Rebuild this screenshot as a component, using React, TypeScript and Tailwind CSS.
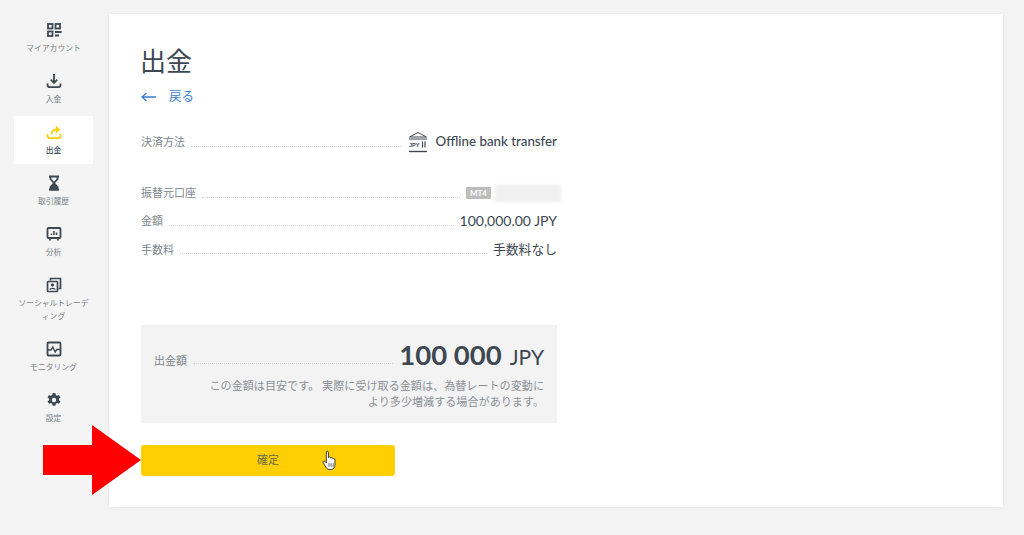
import type { ReactNode } from 'react'

const FONT = "font-['Lato','Noto_Sans_CJK_JP',sans-serif]"

const Account = () => (
  <svg width="16" height="16" viewBox="0 0 16 16" fill="none" stroke="#3d4852" strokeWidth="1.800">
    <rect x="2" y="2" width="4.500" height="4.500" />
    <rect x="9.500" y="2" width="4.500" height="4.500" />
    <rect x="2" y="9.500" width="4.500" height="4.500" />
    <path d="M9 10h6.500M9 13.500h4" />
  </svg>
)

const Deposit = () => (
  <svg width="16" height="16" viewBox="0 0 16 16" fill="none" stroke="#3d4852" strokeWidth="1.800">
    <path d="M8 1v8.500M4.800 6.600 8 10l3.200-3.400" />
    <path d="M1.500 10.500v1.200c0 1.500 1 2.500 2.500 2.500h8c1.500 0 2.500-1 2.500-2.500v-1.200" />
  </svg>
)

const Withdraw = () => (
  <svg width="16" height="16" viewBox="0 0 16 16" fill="none" stroke="#ffcf01" strokeWidth="1.800">
    <path d="M1.500 10v1.700c0 1.500 1 2.500 2.500 2.500h8c1.500 0 2.500-1 2.500-2.500V10" />
    <path d="M5.500 10.500c0-3 2-4.800 5.500-4.800" />
    <path d="M9.800 1.800 13.500 5.600 9.800 9.200" fill="#ffcf01" strokeWidth="1" />
  </svg>
)

const Hourglass = () => (
  <svg width="16" height="16" viewBox="0 0 16 16" fill="none" stroke="#3d4852" strokeWidth="1.800">
    <path d="M3 1.500h10M3 14.500h10" />
    <path d="M4.500 1.500v2.500L8 8l3.500-4V1.500" />
    <path d="M4.500 14.500V12L8 8l3.500 4v2.500z" fill="#3d4852" />
  </svg>
)

const Analytics = () => (
  <svg width="16" height="16" viewBox="0 0 16 16" fill="none" stroke="#3d4852" strokeWidth="1.800">
    <rect x="1.500" y="2" width="13" height="10" rx="1" />
    <path d="M4 12v2.500M12 12v2.500" />
    <path d="M5.500 9V7.500M8 9V5M10.500 9V6.500" strokeWidth="1.500" />
  </svg>
)

const Social = () => (
  <svg width="16" height="16" viewBox="0 0 16 16" fill="none" stroke="#3d4852" strokeWidth="1.700">
    <path d="M4.500 3.500V1.500h10v10h-2" />
    <rect x="1.500" y="4.500" width="10" height="10" rx="0.800" />
    <circle cx="6.500" cy="8" r="1.300" fill="#3d4852" strokeWidth="0.800" />
    <path d="M4 12.500c0-1.500 5-1.500 5 0" strokeWidth="1.300" />
  </svg>
)

const Monitoring = () => (
  <svg width="16" height="16" viewBox="0 0 16 16" fill="none" stroke="#3d4852" strokeWidth="1.800">
    <rect x="1.500" y="1.500" width="13" height="13" rx="1" />
    <path d="M2 9h3l1.800-3 2.400 5 1.500-2.500H14" strokeWidth="1.400" />
  </svg>
)

const Settings = () => (
  <svg width="16" height="16" viewBox="0 0 16 16">
    <path
      fill="#3d4852"
      fillRule="evenodd"
      d="M6.600 1h2.800l.4 2 1.200.7 2-.7 1.400 2.400-1.500 1.300v1.400l1.500 1.300-1.400 2.400-2-.7-1.200.7-.4 2H6.600l-.4-2-1.200-.7-2 .7-1.400-2.400 1.500-1.300V6.700L1.600 5.400 3 3l2 .7 1.200-.7zM8 5.800a2.200 2.200 0 1 0 0 4.400 2.200 2.200 0 0 0 0-4.400z"
    />
  </svg>
)

const BankIcon = () => (
  <svg width="22" height="22" viewBox="0 0 22 22" fill="none" stroke="#3d4852">
    <path d="M2.500 6 11 1.500 19.500 6z" strokeWidth="1" />
    <path d="M2 8h18" strokeWidth="1" />
    <path d="M15.500 10.500v6M18 10.500v6" strokeWidth="1.200" />
    <path d="M2 20.500h18" strokeWidth="1.400" />
    <text x="2" y="16" fontSize="5.500" fontWeight="700" fill="#3d4852" stroke="none" fontFamily="Liberation Sans, sans-serif">JPY</text>
  </svg>
)

const HandCursor = () => (
  <svg width="15" height="21" viewBox="0 0 14 20">
    <path
      d="M4 1.500c.8-.8 2-.4 2 .8v5c.3-.8 2-.8 2.200.4.400-.7 1.900-.5 2 .6.500-.5 2-.2 2 1.200v4.500c0 2.500-1.500 4.500-3.500 4.500H6.500c-1.500 0-2.300-1-3-2.200L1 12c-.6-1.200.9-2.200 1.800-1L4 12.300z"
      fill="#fff"
      stroke="#333"
      strokeWidth="0.900"
    />
    <path d="M6.500 12.500v3.500M8.500 12.500v3.500M10.500 12.500v3.500" stroke="#333" strokeWidth="0.700" />
  </svg>
)

const NAV: { label: ReactNode; icon: ReactNode; active?: boolean; h: string }[] = [
  { label: 'マイアカウント', icon: <Account />, h: 'h-[51px]' },
  { label: '入金', icon: <Deposit />, h: 'h-[51px]' },
  { label: '出金', icon: <Withdraw />, active: true, h: 'h-[51px]' },
  { label: '取引履歴', icon: <Hourglass />, h: 'h-[51px]' },
  { label: '分析', icon: <Analytics />, h: 'h-[51px]' },
  {
    label: (
      <>
        ソーシャルトレーデ
        <br />
        ィング
      </>
    ),
    icon: <Social />,
    h: 'h-[64px]',
  },
  { label: 'モニタリング', icon: <Monitoring />, h: 'h-[51px]' },
  { label: '設定', icon: <Settings />, h: 'h-[51px]' },
]

function NavItem({ label, icon, active, h }: (typeof NAV)[number]) {
  return (
    <div className={`${h} flex flex-col items-center`}>
      <div
        className={`w-[79px] flex flex-col items-center pt-[8px] pb-[7px] ${active ? 'bg-white h-[48px] text-[#3d4852]' : 'text-[#777e86]'}`}
      >
        <div className="h-4 flex items-center justify-center mb-[4px]">{icon}</div>
        <div className={`text-[7.800px] leading-[12.500px] text-center whitespace-nowrap ${active ? 'font-medium' : ''}`}>
          {label}
        </div>
      </div>
    </div>
  )
}

function Row({ label, children, className = '' }: { label: string; children: ReactNode; className?: string }) {
  return (
    <div className={`flex items-center ${className}`}>
      <span className="text-[11px] text-[#80868d] leading-4">{label}</span>
      <span className="flex-1 mx-[6px] mt-[8px] border-b border-dotted border-[#d2d2d2]" />
      {children}
    </div>
  )
}

export default function App() {
  return (
    <div className={`${FONT} relative w-[1024px] h-[535px] bg-[#f4f4f4] flex overflow-hidden`}>
      <aside className="w-[107px] shrink-0 pt-[14px]">
        {NAV.map((item, i) => (
          <NavItem key={i} {...item} />
        ))}
      </aside>

      <main className="ml-[2px] mt-[14px] w-[894px] h-[493px] bg-white shadow-[0_0_4px_rgba(0,0,0,0.08)] pl-[32px] pt-[29px]">
        <div className="w-[416px]">
          <h1 className="-ml-[1px] text-[26px] leading-[36px] text-[#3d4852]">出金</h1>
          <div className="mt-[9px] flex items-center gap-[12px] text-[12.500px] leading-[18px] text-[#3a7fd5]">
            <svg width="16" height="10" viewBox="0 0 16 10" fill="none" stroke="#3a7fd5" strokeWidth="1.300">
              <path d="M15 5H1M5.500 1 1 5l4.500 4" />
            </svg>
            戻る
          </div>

          <Row label="決済方法" className="mt-[23px] h-[26px]">
            <span className="flex items-center gap-[7px]">
              <BankIcon />
              <span className="text-[13.300px] font-medium text-[#3d4852]">Offline bank transfer</span>
            </span>
          </Row>

          <Row label="振替元口座" className="mt-[24px] h-[28px]">
            <span className="flex items-center gap-[4px] -mr-[4px]">
              <span className="bg-[#bdbdbd] text-white text-[8px] font-bold leading-[10px] px-[4px] py-[1px] rounded-[1px]">
                MT4
              </span>
              <span className="w-[66px] h-[17px] bg-[#f0f0f0] blur-[1.500px]" />
            </span>
          </Row>

          <Row label="金額" className="h-[28px]">
            <span className="-mt-[2px] text-[14px] text-[#3d4852]">100,000.00 JPY</span>
          </Row>

          <Row label="手数料" className="h-[29px]">
            <span className="text-[12.800px] text-[#3d4852]">手数料なし</span>
          </Row>

          <section className="mt-[61px] h-[98px] bg-[#f3f3f3] px-[13px] pt-[14px] text-right">
            <div className="flex items-center h-[36px]">
              <span className="mt-[8px] text-[11px] text-[#80868d]">出金額</span>
              <span className="flex-1 mx-[6px] mt-[12px] border-b border-dotted border-[#d2d2d2]" />
              <span className="text-[#3d4852] leading-[36px]">
                <span className="text-[27.500px] font-bold">100 000</span>
                <span className="text-[21px] ml-[8px]">JPY</span>
              </span>
            </div>
            <p className="mt-[3px] text-[11.100px] leading-[16px] text-[#8a8f95]">
              この金額は目安です。 実際に受け取る金額は、為替レートの変動に
              <br />
              より多少増減する場合があります。
            </p>
          </section>

          <button className="mt-[22px] w-[254px] h-[31px] bg-[#ffcf01] rounded-[3px] text-[11px] text-[#6b6a4a]">
            確定
          </button>
        </div>
      </main>

      <div className="absolute left-[322px] top-[450px]">
        <HandCursor />
      </div>

      <svg className="absolute left-[42px] top-[424px]" width="100" height="72" viewBox="0 0 100 72">
        <path d="M1 21h49V1l49 35-49 35V51H1z" fill="#ff0000" />
      </svg>
    </div>
  )
}
